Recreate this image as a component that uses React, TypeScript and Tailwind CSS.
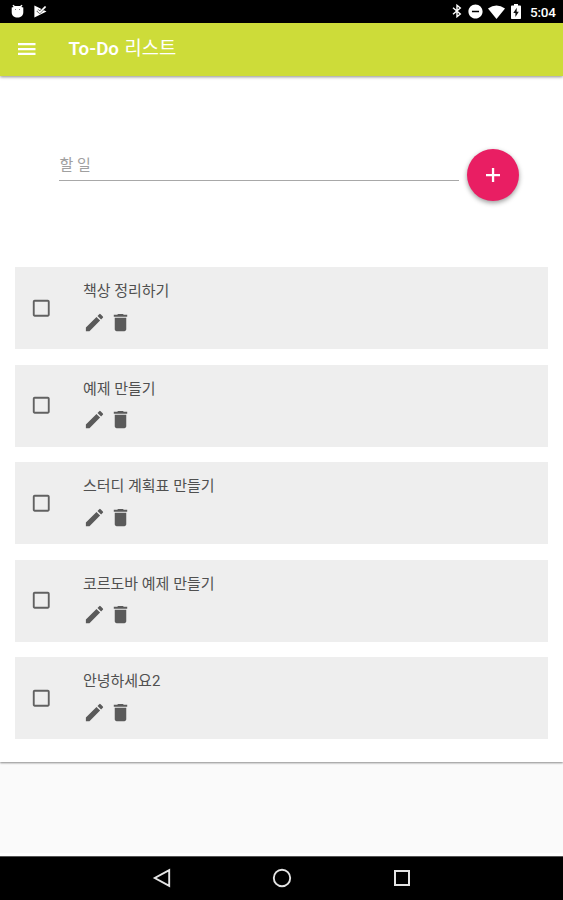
import React from "react";
import {
  MdCheckBoxOutlineBlank,
  MdCreate,
  MdDelete,
  MdDoNotDisturbOn,
} from "react-icons/md";

const todos: string[] = [
  "책상 정리하기",
  "예제 만들기",
  "스터디 계획표 만들기",
  "코르도바 예제 만들기",
  "안녕하세요2",
];

function StatusBar() {
  return (
    <div className="flex h-[22.5px] shrink-0 items-center bg-black text-white">
      <svg className="ml-[11px] h-[14px] w-[13px]" viewBox="0 0 13 14" fill="currentColor">
        <path d="M2.2.8 4 2.1h5L10.800.8l.7.6-1.200 1.500 2 .6v4.700C12.300 11.500 9.700 13.500 6.500 13.500S.7 11.500.7 8.200V3.500l2-.6L1.500 1.400z" />
        <path d="M4 5h1v.8H4zM8 5h1v.8H8z" fill="#555" />
      </svg>
      <svg className="ml-[10px] h-[13px] w-[13px]" viewBox="0 0 13 13">
        <path d="M.4.500 12.500 6.400.4 12.500z" fill="#fff" />
        <path d="m3.400 5.200 2.400 2.100 5.600-5.400" stroke="#222" strokeWidth="2.600" fill="none" />
        <path d="m3.400 5.200 2.400 2.100 5.800-5.800" stroke="#fff" strokeWidth="1.700" fill="none" />
      </svg>
      <div className="flex-1" />
      <svg className="h-[14px] w-[10px]" viewBox="0 0 10 14" fill="none" stroke="currentColor" strokeWidth="1.400">
        <path d="m1 3.700 7.300 6.300L5 12.700V1.300L8.300 4 1 10.300" />
      </svg>
      <MdDoNotDisturbOn className="ml-[5px] mt-px h-[17px] w-[17px]" />
      <svg className="ml-[4px] mt-px h-[14px] w-[17px]" viewBox="0 0 17 14" fill="currentColor">
        <path d="M0 3.500Q8.500-2.500 17 3.500L8.500 14z" />
      </svg>
      <svg className="ml-[6px] h-[15px] w-[10px]" viewBox="0 0 10 15">
        <path d="M3 0h4v1.600h2.200q.8 0 .8.800v11.800q0 .8-.8.800H.8q-.8 0-.8-.8V2.400q0-.8.800-.8H3z" fill="#fff" />
        <path d="M5.700 3.700 2.300 9h2.100v4L7.800 7.700H5.700z" fill="#111" />
      </svg>
      <span className="ml-[9px] mr-[7px] w-[26px] whitespace-nowrap pt-px text-[13.500px] font-medium leading-[22px] tracking-[-0.2px]">
        5:04
      </span>
    </div>
  );
}

function Header() {
  return (
    <header className="relative flex h-[53.5px] shrink-0 items-center bg-[#cddc39] text-white shadow-[0_1px_3px_rgba(0,0,0,0.45)]">
      <svg className="ml-[18px] h-3 w-[18px]" viewBox="0 0 18 12" fill="currentColor">
        <path d="M0 0h17.500v2.300H0zM0 4.900h17.500v2.300H0zM0 9.700h17.500V12H0z" />
      </svg>
      <h1 className="ml-[32.500px] whitespace-nowrap text-[18.800px] font-normal leading-6">
        <span className="font-semibold">To-Do</span>
        <span className="ml-[5.500px]">리스트</span>
      </h1>
    </header>
  );
}

function TodoCard({ title }: { title: string }) {
  return (
    <li className="flex h-[82px] items-center bg-[#eeeeee]">
      <MdCheckBoxOutlineBlank className="ml-[14.500px] h-[22.500px] w-[22.500px] shrink-0 text-[#616161]" />
      <div className="ml-[30.500px] flex h-full flex-col pt-[14px]">
        <span className="whitespace-nowrap text-[15px] leading-5 text-[#505050]">{title}</span>
        <div className="mt-[9.500px] flex gap-[3px] text-[#5a5a5a]">
          <MdCreate className="h-[23px] w-[23px]" />
          <MdDelete className="h-[23px] w-[23px]" />
        </div>
      </div>
    </li>
  );
}

function NavigationBar() {
  return (
    <nav className="flex h-[44.500px] shrink-0 items-center justify-center gap-[100px] border-t border-[#555] bg-black">
      <svg className="h-5 w-5" viewBox="0 0 20 20" fill="none" stroke="#e4e4e4" strokeWidth="1.900">
        <path d="M17.200 2.200v15.600L2.800 10z" />
      </svg>
      <svg className="h-5 w-5" viewBox="0 0 20 20" fill="none" stroke="#e4e4e4" strokeWidth="1.900">
        <circle cx="10" cy="10" r="8.200" />
      </svg>
      <svg className="h-5 w-5" viewBox="0 0 20 20" fill="none" stroke="#e4e4e4" strokeWidth="2">
        <rect x="3" y="3" width="14" height="14" />
      </svg>
    </nav>
  );
}

export default function App() {
  return (
    <div className="flex h-[900px] w-[563px] flex-col overflow-hidden bg-white font-[Roboto,'Noto_Sans_CJK_KR',sans-serif]">
      <StatusBar />
      <Header />
      <div className="flex flex-1 flex-col bg-[#fafafa]">
        <main className="h-[686px] bg-white px-[15.400px] shadow-[0_1px_2px_rgba(0,0,0,0.45)]">
          <form className="flex h-[191px] pl-[44px]" onSubmit={(e) => e.preventDefault()}>
            <input
              aria-label="할 일"
              placeholder="할 일"
              className="mt-[72px] h-[33px] w-[400px] border-b border-[#a8a8a8] bg-transparent pt-px text-[15px] outline-none placeholder:text-[#a0a0a0]"
            />
            <button
              type="submit"
              aria-label="추가"
              className="ml-[7.200px] mt-[73px] flex h-[52px] w-[52px] items-center justify-center rounded-full bg-[#e91e63] text-white shadow-[0_2px_5px_rgba(0,0,0,0.4)]"
            >
              <svg className="h-[14px] w-[14px]" viewBox="0 0 14 14" fill="currentColor">
                <path d="M5.900 0h2.300v5.900H14v2.300H8.200V14H5.900V8.200H0V5.900h5.900z" />
              </svg>
            </button>
          </form>
          <ul className="flex flex-col gap-[15.500px]">
            {todos.map((title) => (
              <TodoCard key={title} title={title} />
            ))}
          </ul>
        </main>
      </div>
      <div className="h-[3px] shrink-0 bg-white" />
      <NavigationBar />
    </div>
  );
}
